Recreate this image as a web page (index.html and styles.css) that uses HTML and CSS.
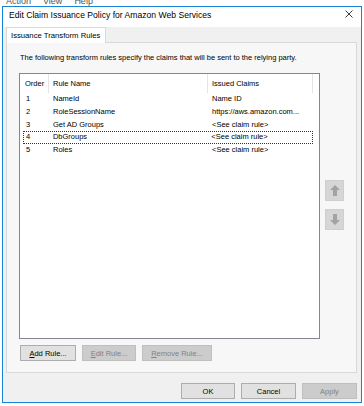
FILE: index.html
```html
<!DOCTYPE html>
<html lang="en">
<head>
    <meta charset="UTF-8">
    <meta name="viewport" content="width=device-width, initial-scale=1.0">
    <title>Edit Claim Issuance Policy</title>
    <link rel="stylesheet" href="styles.css">
</head>
<body>
<div class="menu-behind">
    <span>Action</span>
    <span>View</span>
    <span>Help</span>
</div>
<div class="window">
    <div class="titlebar">
        <span class="title">Edit Claim Issuance Policy for Amazon Web Services</span>
        <svg class="close" width="8" height="8" viewBox="0 0 8 8">
            <path d="M0.5 0.5 L7.5 7.5 M7.5 0.5 L0.5 7.5" stroke="#222" stroke-width="0.9" fill="none"/>
        </svg>
    </div>
    <div class="tabs">
        <div class="tab">Issuance Transform Rules</div>
    </div>
    <div class="panel">
        <p class="desc">The following transform rules specify the claims that will be sent to the relying party.</p>
        <div class="list-row">
            <div class="list">
                <div class="row header">
                    <div class="col c-order">Order</div>
                    <div class="col c-name">Rule Name</div>
                    <div class="col c-claims">Issued Claims</div>
                    <div class="col c-rest"></div>
                </div>
                <div class="row">
                    <div class="col c-order">1</div>
                    <div class="col c-name">NameId</div>
                    <div class="col c-claims">Name ID</div>
                </div>
                <div class="row">
                    <div class="col c-order">2</div>
                    <div class="col c-name">RoleSessionName</div>
                    <div class="col c-claims">https://aws.amazon.com...</div>
                </div>
                <div class="row">
                    <div class="col c-order">3</div>
                    <div class="col c-name">Get AD Groups</div>
                    <div class="col c-claims">&lt;See claim rule&gt;</div>
                </div>
                <div class="row focused">
                    <div class="col c-order">4</div>
                    <div class="col c-name">DbGroups</div>
                    <div class="col c-claims">&lt;See claim rule&gt;</div>
                </div>
                <div class="row">
                    <div class="col c-order">5</div>
                    <div class="col c-name">Roles</div>
                    <div class="col c-claims">&lt;See claim rule&gt;</div>
                </div>
            </div>
            <div class="movers">
                <div class="mover">
                    <svg width="10" height="11" viewBox="0 0 10 11">
                        <path d="M5 0 L10 5 L7 5 L7 11 L3 11 L3 5 L0 5 Z" fill="#a3a3a3"/>
                    </svg>
                </div>
                <div class="mover">
                    <svg width="10" height="11" viewBox="0 0 10 11">
                        <path d="M5 11 L10 6 L7 6 L7 0 L3 0 L3 6 L0 6 Z" fill="#a3a3a3"/>
                    </svg>
                </div>
            </div>
        </div>
        <div class="rule-buttons">
            <button class="btn b-add"><u>A</u>dd Rule...</button>
            <button class="btn b-edit" disabled><u>E</u>dit Rule...</button>
            <button class="btn b-remove" disabled><u>R</u>emove Rule...</button>
        </div>
    </div>
    <div class="dialog-buttons">
        <button class="btn b-ok">OK</button>
        <button class="btn b-cancel">Cancel</button>
        <button class="btn b-apply" disabled>Apply</button>
    </div>
</div>
</body>
</html>
```

FILE: styles.css
```css
body {
    margin: 0;
    background: #ffffff;
    font-family: "Liberation Sans", Arial, sans-serif;
    font-size: 7.5px;
    color: #000;
}
.menu-behind {
    height: 6px;
    overflow: hidden;
    display: flex;
    align-items: flex-end;
    gap: 12px;
    padding-left: 6px;
    font-size: 9px;
    line-height: 9px;
    color: #555;
}
.window {
    margin-left: 2px;
    width: 358px;
    height: 395px;
    border: 1px solid #1883d7;
    background: #f0f0f0;
    display: flex;
    flex-direction: column;
}
.titlebar {
    height: 20px;
    background: #fff;
    display: flex;
    align-items: center;
    justify-content: space-between;
    padding: 0 8px 0 6px;
    flex-shrink: 0;
}
.title {
    font-size: 8.6px;
    margin-top: -5px;
}
.close {
    margin-top: -6px;
}
.tabs {
    display: flex;
    padding-left: 3px;
    height: 15px;
    flex-shrink: 0;
}
.tab {
    width: 100px;
    height: 16px;
    box-sizing: border-box;
    background: #fff;
    border: 1px solid #d9d9d9;
    border-bottom: none;
    padding-left: 4px;
    line-height: 15px;
    font-size: 7.7px;
    position: relative;
    z-index: 1;
}
.panel {
    margin: 0 4px 0 3px;
    height: 331px;
    box-sizing: border-box;
    border: 1px solid #d9d9d9;
    background: #f7f7f7;
    padding: 10px 0 0 12px;
    display: flex;
    flex-direction: column;
}
.desc {
    margin: 0 0 10px 1px;
    line-height: 10px;
}
.list-row {
    display: flex;
    gap: 5px;
}
.list {
    width: 301px;
    height: 266px;
    box-sizing: border-box;
    border: 1px solid #828790;
    background: #fff;
}
.row {
    display: flex;
    height: 12.75px;
    line-height: 12.75px;
    margin-left: 3px;
    box-sizing: border-box;
    white-space: nowrap;
}
.row.header {
    height: 19px;
    line-height: 20px;
    margin-left: 0;
}
.col {
    box-sizing: border-box;
    overflow: hidden;
}
.c-order {
    width: 26px;
    padding-left: 3px;
}
.c-name {
    width: 159px;
    padding-left: 4px;
}
.c-claims {
    width: 105px;
    padding-left: 4px;
}
.header .c-order {
    width: 29px;
    padding-left: 5px;
    border-right: 1px solid #e5e5e5;
}
.header .c-name,
.header .c-claims {
    border-right: 1px solid #e5e5e5;
}
.row.focused {
    width: 290px;
    border: 1px dotted #333;
    line-height: 10.75px;
}
.row.focused .c-order {
    width: 25px;
    padding-left: 2px;
}
.movers {
    display: flex;
    flex-direction: column;
    gap: 8px;
    padding-top: 107px;
}
.mover {
    width: 19px;
    height: 21px;
    box-sizing: border-box;
    background: #d6d6d6;
    border: 1px solid #cfcfcf;
    display: flex;
    align-items: center;
    justify-content: center;
}
.rule-buttons {
    display: flex;
    gap: 6px;
    margin-top: 6px;
    padding-left: 1px;
}
.btn {
    height: 16px;
    box-sizing: border-box;
    border: 1px solid #adadad;
    background: #e1e1e1;
    font-family: "Liberation Sans", Arial, sans-serif;
    font-size: 7.5px;
    color: #000;
    padding: 0;
    margin: 0;
}
.btn:disabled {
    background: #cccccc;
    border-color: #bfbfbf;
    color: #838383;
}
.btn u {
    text-decoration-thickness: 0.6px;
    text-underline-offset: 1px;
}
.b-add { width: 56px; }
.b-edit { width: 54px; }
.b-remove { width: 70px; }
.dialog-buttons {
    display: flex;
    justify-content: flex-end;
    gap: 6px;
    padding: 10px 4px 0 0;
}
.b-ok { width: 54px; }
.b-cancel { width: 55px; }
.b-apply { width: 55px; }
```
